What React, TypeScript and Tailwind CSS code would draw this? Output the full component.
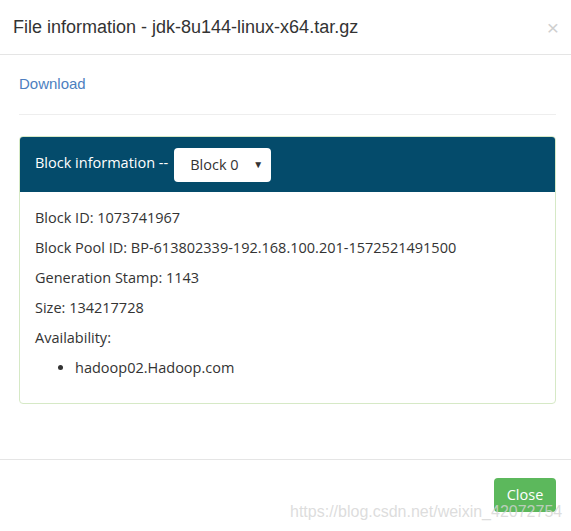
const rows = [
  "Block ID: 1073741967",
  "Block Pool ID: BP-613802339-192.168.100.201-1572521491500",
  "Generation Stamp: 1143",
  "Size: 134217728",
  "Availability:",
];

export default function App() {
  return (
    <div className="relative h-[531px] w-[571px] overflow-hidden bg-white font-['Liberation_Sans',Arial,sans-serif] text-[#333]">
      <div className="flex h-[55px] items-center justify-between border-b border-[#e5e5e5] pl-[13px] pr-[12px]">
        <h4 className="text-[18px] leading-none text-[#333]">File information - jdk-8u144-linux-x64.tar.gz</h4>
        <span className="text-[21px] leading-none text-[#cfcfcf]">×</span>
      </div>

      <div className="pl-[19px] pr-[15px]">
        <div className="flex h-[60px] items-center border-b border-[#eee]">
          <a className="text-[15px] text-[#4d7fbf]">Download</a>
        </div>

        <div className="mt-[21px] h-[268px] overflow-hidden rounded-[4px] border border-[#d6e9c6] font-['Open_Sans','Noto_Sans',sans-serif] text-[14.5px]">
          <div className="flex h-[55px] items-center gap-[6px] bg-[#044b6b] pl-[15px] text-white">
            <span className="-mt-[3px]">Block information --</span>
            <div className="flex h-[34px] w-[97px] items-center justify-between rounded-[4px] bg-white pl-[16px] pr-[8px] text-[#333]">
              <span>Block 0</span>
              <span className="text-[10px]">▼</span>
            </div>
          </div>
          <div className="px-[15px] pt-[11px]">
            {rows.map((r) => (
              <p key={r} className="h-[30px] leading-[30px]">
                {r}
              </p>
            ))}
            <ul className="list-disc pl-[40px]">
              <li className="h-[30px] leading-[30px]">hadoop02.Hadoop.com</li>
            </ul>
          </div>
        </div>
      </div>

      <div className="mt-[55px] flex justify-end border-t border-[#e5e5e5] px-[15px] pt-[18px]">
        <button className="h-[34px] w-[62px] rounded-[4px] bg-[#5cb85c] font-['Open_Sans','Noto_Sans',sans-serif] text-[14.5px] text-white">
          Close
        </button>
      </div>

      <span className="pointer-events-none absolute left-[290px] top-[500px] text-[16px] text-[#d4d4d4]/80">
        https://blog.csdn.net/weixin_42072754
      </span>
    </div>
  );
}
